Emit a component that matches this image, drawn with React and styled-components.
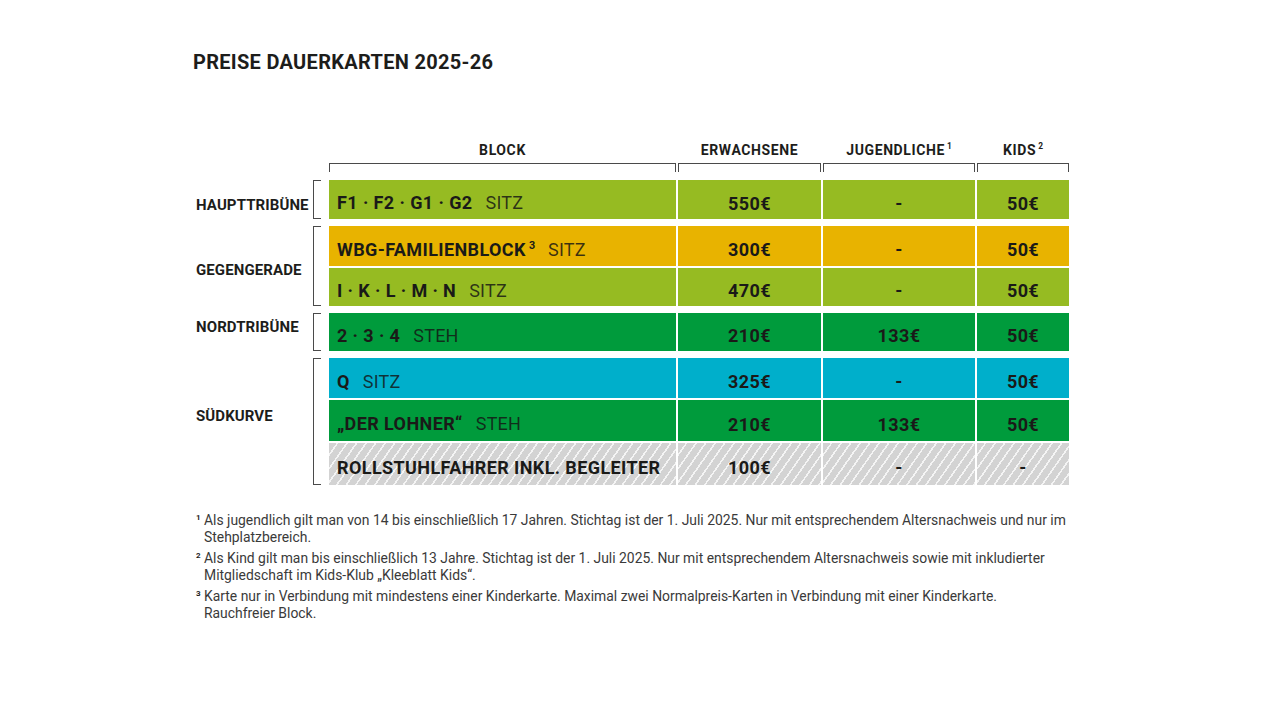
import React from "react";
import styled, { createGlobalStyle, css } from "styled-components";

const Global = createGlobalStyle`
  html, body { margin: 0; padding: 0; background: #ffffff; }
  body { font-family: Roboto, "Liberation Sans", sans-serif; color: #1d1d1b; }
`;

const COLORS = {
  lime: "#96bb22",
  yellow: "#e8b300",
  green: "#009b3c",
  blue: "#00afcb",
};

const Page = styled.div`
  width: 1280px;
  height: 720px;
  box-sizing: border-box;
  padding: 48px 0 0 193px;
`;

const Title = styled.h1`
  margin: 0;
  font-size: 20px;
  line-height: 28px;
  font-weight: 700;
  letter-spacing: 0.3px;
  color: #1d1d1b;
`;

const Table = styled.div`
  margin-top: 64px;
  padding-left: 3px;
  display: flex;
  flex-direction: column;
`;

const HeaderRow = styled.div`
  display: grid;
  grid-template-columns: 347px 143px 152px 92px;
  column-gap: 2px;
  padding-left: 133px;
  margin-bottom: 8px;
`;

const HeaderCell = styled.div`
  display: flex;
  flex-direction: column;
  align-items: stretch;
`;

const HeaderText = styled.div`
  text-align: center;
  font-size: 14px;
  line-height: 20px;
  font-weight: 700;
  letter-spacing: 0.6px;
  color: #1d1d1b;
`;

const Sup = styled.sup`
  font-size: 0.6em;
  line-height: 0;
  vertical-align: ${(p) => (p.$tight ? 0.75 : 0.62)}em;
  margin-left: ${(p) => (p.$tight ? 2 : 3)}px;
  font-weight: 700;
  letter-spacing: 0;
`;

const HeaderBracket = styled.div`
  margin-top: 3px;
  height: 9px;
  border: 1px solid #4a4a4a;
  border-bottom: none;
  box-sizing: border-box;
`;

const Groups = styled.div`
  display: flex;
  flex-direction: column;
  gap: 7px;
`;

const Group = styled.div`
  display: flex;
  align-items: stretch;
`;

const GroupLabel = styled.div`
  width: 117px;
  display: flex;
  align-items: center;
  font-size: 15px;
  font-weight: 700;
  letter-spacing: 0.1px;
  color: #1d1d1b;
  span {
    position: relative;
    top: ${(p) => p.$shift}px;
  }
`;

const GroupBracket = styled.div`
  width: 8px;
  margin-right: 8px;
  border: 1px solid #4a4a4a;
  border-right: none;
  box-sizing: border-box;
`;

const Rows = styled.div`
  display: flex;
  flex-direction: column;
  gap: 2px;
`;

const Row = styled.div`
  display: grid;
  grid-template-columns: 347px 143px 152px 92px;
  column-gap: 2px;
  height: ${(p) => p.$h}px;
`;

const hatch = css`
  background-color: #d3d3d3;
  background-image: repeating-linear-gradient(
    125deg,
    #d3d3d3 0px,
    #d3d3d3 6.2px,
    #f4f4f4 6.2px,
    #f4f4f4 7.8px
  );
`;

const Cell = styled.div`
  display: flex;
  align-items: center;
  justify-content: ${(p) => (p.$left ? "flex-start" : "center")};
  padding: 7px ${(p) => (p.$left ? "8px" : "0")} 0;
  box-sizing: border-box;
  font-size: 18px;
  font-weight: 700;
  letter-spacing: 0.4px;
  color: #1a1a18;
  white-space: nowrap;
  ${(p) => (p.$tone === "hatch" ? hatch : `background: ${COLORS[p.$tone]};`)}
`;

const CellText = styled.span`
  display: inline-block;
  line-height: 22px;
`;

const Kind = styled.span`
  margin-left: 13px;
  font-weight: 400;
  letter-spacing: 0.2px;
  color: rgba(20, 20, 20, 0.82);
`;

const Notes = styled.div`
  margin-top: 27px;
  padding-left: 3px;
  display: flex;
  flex-direction: column;
  gap: 4px;
`;

const Note = styled.div`
  display: flex;
  font-size: 13.9px;
  line-height: 17px;
  color: #3a3a3a;
`;

const NoteNum = styled.span`
  width: 8px;
  flex: none;
  font-size: 8px;
  font-weight: 700;
  line-height: 11px;
  color: #1d1d1b;
`;

const NoteText = styled.p`
  margin: 0;
  width: 866px;
`;

const groups = [
  {
    label: "HAUPTTRIBÜNE",
    shift: 5,
    rows: [
      { tone: "lime", h: 39, name: "F1 · F2 · G1 · G2", kind: "SITZ", erw: "550€", jug: "-", kids: "50€" },
    ],
  },
  {
    label: "GEGENGERADE",
    shift: 4,
    rows: [
      { tone: "yellow", h: 40, name: "WBG-FAMILIENBLOCK", sup: "3", kind: "SITZ", erw: "300€", jug: "-", kids: "50€" },
      { tone: "lime", h: 38, name: "I · K · L · M · N", kind: "SITZ", erw: "470€", jug: "-", kids: "50€" },
    ],
  },
  {
    label: "NORDTRIBÜNE",
    shift: -5,
    rows: [
      { tone: "green", h: 38, name: "2 · 3 · 4", kind: "STEH", erw: "210€", jug: "133€", kids: "50€" },
    ],
  },
  {
    label: "SÜDKURVE",
    shift: -6,
    rows: [
      { tone: "blue", h: 40, name: "Q", kind: "SITZ", erw: "325€", jug: "-", kids: "50€" },
      { tone: "green", h: 41, name: "„DER LOHNER“", kind: "STEH", erw: "210€", jug: "133€", kids: "50€" },
      { tone: "hatch", h: 42, name: "ROLLSTUHLFAHRER INKL. BEGLEITER", erw: "100€", jug: "-", kids: "-" },
    ],
  },
];

const headers = [
  { text: "BLOCK" },
  { text: "ERWACHSENE" },
  { text: "JUGENDLICHE", sup: "1" },
  { text: "KIDS", sup: "2" },
];

const notes = [
  {
    n: "1",
    text: "Als jugendlich gilt man von 14 bis einschließlich 17 Jahren. Stichtag ist der 1. Juli 2025. Nur mit entsprechendem Altersnachweis und nur im Stehplatzbereich.",
  },
  {
    n: "2",
    text: "Als Kind gilt man bis einschließlich 13 Jahre. Stichtag ist der 1. Juli 2025. Nur mit entsprechendem Altersnachweis sowie mit inkludierter Mitgliedschaft im Kids-Klub „Kleeblatt Kids“.",
  },
  {
    n: "3",
    text: "Karte nur in Verbindung mit mindestens einer Kinderkarte. Maximal zwei Normalpreis-Karten in Verbindung mit einer Kinderkarte. Rauchfreier Block.",
  },
];

export default function App() {
  return (
    <Page>
      <Global />
      <Title>PREISE DAUERKARTEN 2025-26</Title>
      <Table>
        <HeaderRow>
          {headers.map((h) => (
            <HeaderCell key={h.text}>
              <HeaderText>
                {h.text}
                {h.sup && <Sup $tight>{h.sup}</Sup>}
              </HeaderText>
              <HeaderBracket />
            </HeaderCell>
          ))}
        </HeaderRow>
        <Groups>
          {groups.map((g) => (
            <Group key={g.label}>
              <GroupLabel $shift={g.shift}>
                <span>{g.label}</span>
              </GroupLabel>
              <GroupBracket />
              <Rows>
                {g.rows.map((r) => (
                  <Row key={r.name} $h={r.h}>
                    <Cell $tone={r.tone} $left>
                      <CellText>
                        {r.name}
                        {r.sup && <Sup>{r.sup}</Sup>}
                        {r.kind && <Kind>{r.kind}</Kind>}
                      </CellText>
                    </Cell>
                    <Cell $tone={r.tone}>{r.erw}</Cell>
                    <Cell $tone={r.tone}>{r.jug}</Cell>
                    <Cell $tone={r.tone}>{r.kids}</Cell>
                  </Row>
                ))}
              </Rows>
            </Group>
          ))}
        </Groups>
      </Table>
      <Notes>
        {notes.map((n) => (
          <Note key={n.n}>
            <NoteNum>{n.n}</NoteNum>
            <NoteText>{n.text}</NoteText>
          </Note>
        ))}
      </Notes>
    </Page>
  );
}
